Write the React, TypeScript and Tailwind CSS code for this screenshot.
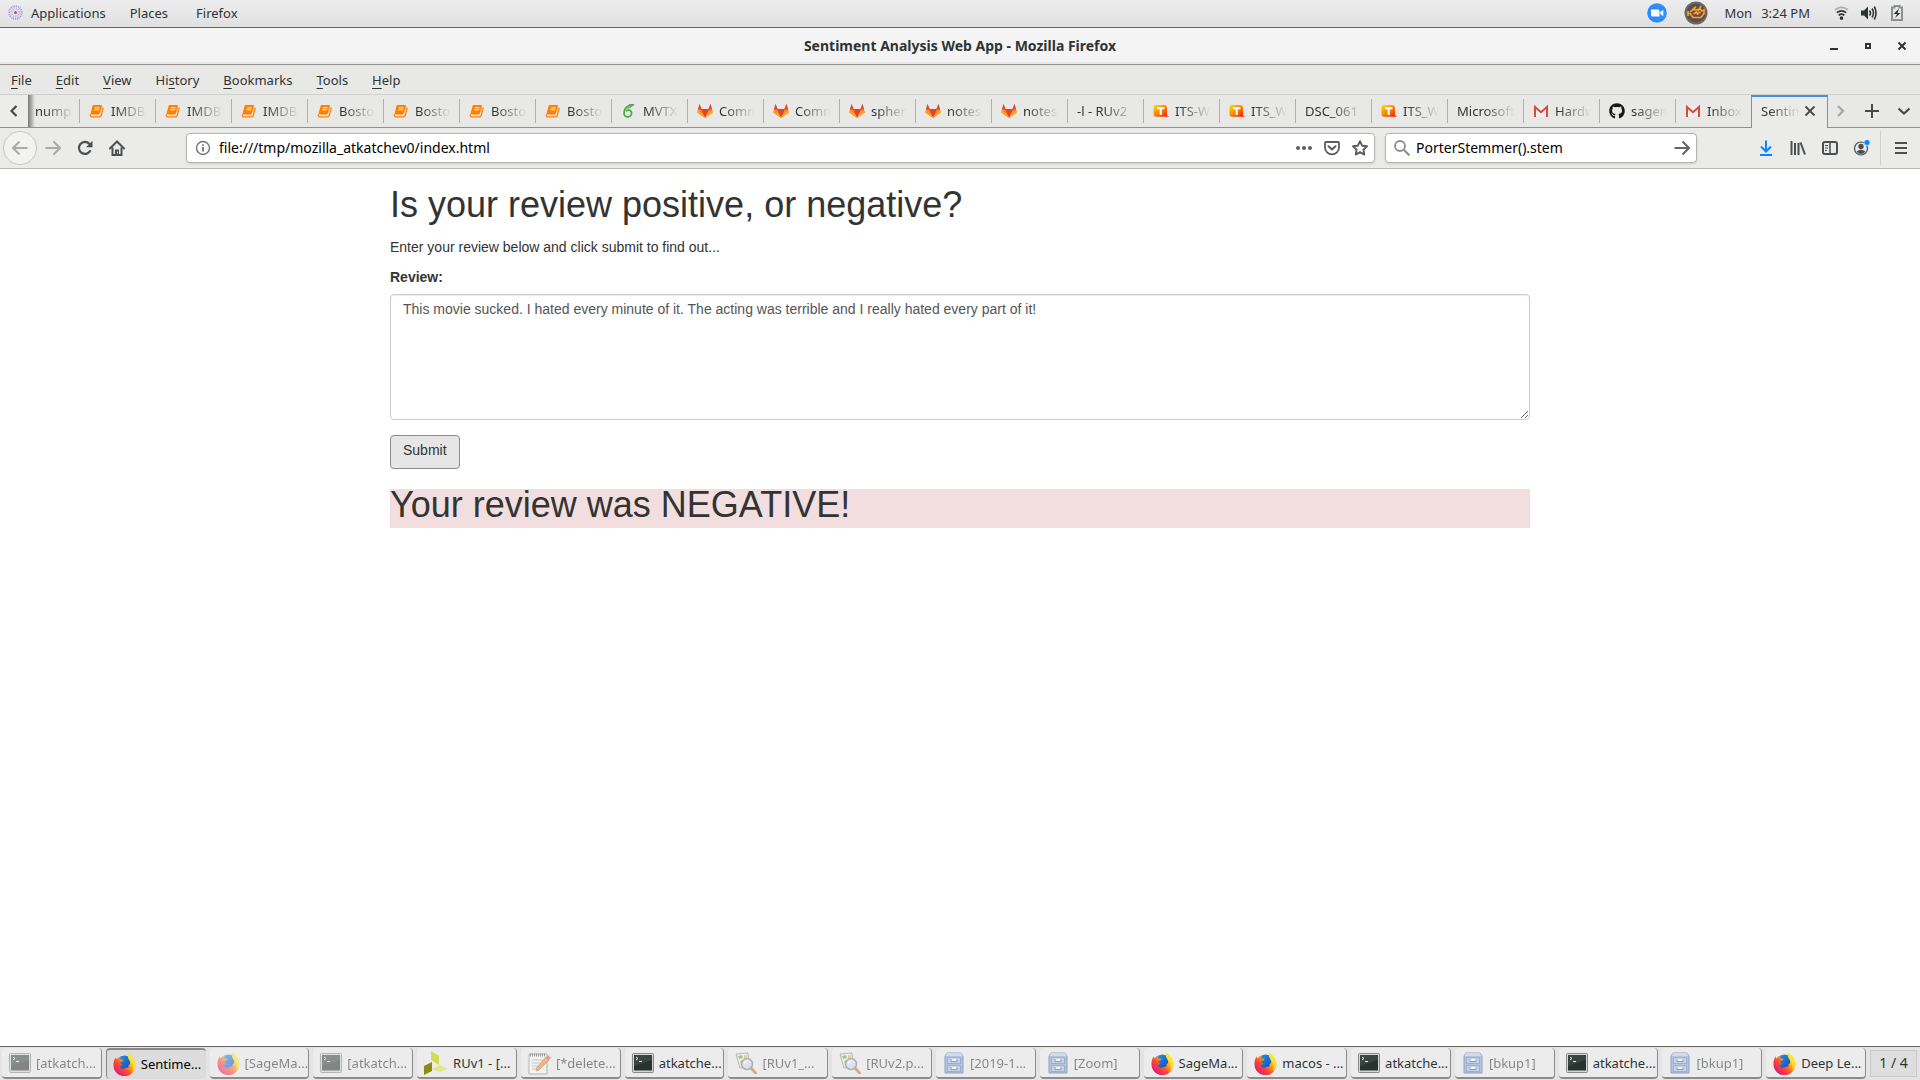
import React from "react";
import { FaGithub } from "react-icons/fa";

const iconNames = ["book", "overleaf", "gitlab", "typo", "gmail", "github"] as const;
type Favicon = (typeof iconNames)[number];

const tabs: { title: string; icon?: Favicon }[] = [
  { title: "IMDB", icon: "book" },
  { title: "IMDB", icon: "book" },
  { title: "IMDB", icon: "book" },
  { title: "Bosto", icon: "book" },
  { title: "Bosto", icon: "book" },
  { title: "Bosto", icon: "book" },
  { title: "Bosto", icon: "book" },
  { title: "MVTX", icon: "overleaf" },
  { title: "Comm", icon: "gitlab" },
  { title: "Comm", icon: "gitlab" },
  { title: "spher", icon: "gitlab" },
  { title: "notes", icon: "gitlab" },
  { title: "notes", icon: "gitlab" },
  { title: "-l - RUv2" },
  { title: "ITS-W", icon: "typo" },
  { title: "ITS_W", icon: "typo" },
  { title: "DSC_061" },
  { title: "ITS_W", icon: "typo" },
  { title: "Microsoft" },
  { title: "Hardw", icon: "gmail" },
  { title: "sagem", icon: "github" },
  { title: "Inbox", icon: "gmail" },
];

type AppIcon = "terminal" | "firefox" | "vivado" | "editor" | "viewer" | "files";

const tasks: { title: string; icon: AppIcon; min?: boolean; active?: boolean }[] = [
  { title: "[atkatch...", icon: "terminal", min: true },
  { title: "Sentime...", icon: "firefox", active: true },
  { title: "[SageMa...", icon: "firefox", min: true },
  { title: "[atkatch...", icon: "terminal", min: true },
  { title: "RUv1 - [...", icon: "vivado" },
  { title: "[*delete...", icon: "editor", min: true },
  { title: "atkatche...", icon: "terminal" },
  { title: "[RUv1_...", icon: "viewer", min: true },
  { title: "[RUv2.p...", icon: "viewer", min: true },
  { title: "[2019-1...", icon: "files", min: true },
  { title: "[Zoom]", icon: "files", min: true },
  { title: "SageMa...", icon: "firefox" },
  { title: "macos - ...", icon: "firefox" },
  { title: "atkatche...", icon: "terminal" },
  { title: "[bkup1]", icon: "files", min: true },
  { title: "atkatche...", icon: "terminal" },
  { title: "[bkup1]", icon: "files", min: true },
  { title: "Deep Le...", icon: "firefox" },
];

function FaviconImage({ name }: { name: Favicon }) {
  switch (name) {
    case "book":
      return (
        <svg className="size-4 shrink-0" viewBox="0 0 16 16">
          <path d="M4.800 2h7.400q1.100 0 .8 1.100l-2.200 7.400q-.3 1-1.300 1H1.300L3.500 3.200Q3.800 2 4.800 2Z" fill="#ff8000" />
          <path d="M1.300 11.500q-.3 2.300 1.700 2.300h7.700q1.100 0 1.400-1L14.300 4.500" fill="none" stroke="#ff8000" strokeWidth="1.300" />
          <path d="M5.800 4.700h4.800M5.200 6.700h4.800" stroke="#fff" strokeWidth="1.100" />
        </svg>
      );
    case "overleaf":
      return (
        <svg className="size-4 shrink-0" viewBox="0 0 16 16" fill="none" stroke="#47a844">
          <path d="M9.500 2C5.500 3 2.700 6.500 3 10.300a3.800 3.800 0 1 0 7.400-1.300C9.700 6.800 6.800 6.600 5 8.200" strokeWidth="1.700" />
          <path d="M7.500 2.300Q9.500 1.300 13 1.700 10.500 2.400 9 4.300L6.500 5.200" strokeWidth="1.300" />
        </svg>
      );
    case "gitlab":
      return (
        <svg className="size-4 shrink-0" viewBox="0 0 16 16">
          <path d="M8 15 3.300 6h9.400Z" fill="#e24329" />
          <path d="M8 15 .8 9.800 1 6h2.800ZM8 15l7.200-5.200L15 6h-2.800Z" fill="#fc8a26" />
          <path d="M8 15 0 9.500.6 7.200 5 10.500ZM8 15l8-5.500-.6-2.300L11 10.500Z" fill="#fca326" />
          <path d="M.8 6.600 2.600.8 4.800 6.600ZM15.200 6.600 13.400.8l-2.200 5.800Z" fill="#e24329" />
        </svg>
      );
    case "typo":
      return (
        <svg className="size-4 shrink-0" viewBox="0 0 16 16">
          <defs>
            <linearGradient id="typo" x1="0" y1="0" x2="1" y2="1">
              <stop offset="0" stopColor="#ffe000" />
              <stop offset=".45" stopColor="#ff8a00" />
              <stop offset="1" stopColor="#f50a00" />
            </linearGradient>
          </defs>
          <path d="M3 2h8q3 0 3 3v7.500l2 1.300H3q-2.500 0-2.500-2.800V5Q.5 2 3 2Z" fill="url(#typo)" />
          <path d="M4 4.300h7.400v2H8.800V12H6.600V6.300H4Z" fill="#fff" />
        </svg>
      );
    case "gmail":
      return (
        <svg className="size-4 shrink-0" viewBox="0 0 16 16">
          <path d="M1 3h14v11H1Z" fill="#f1efee" />
          <path d="M2 14V4L8 9.200 14 4v10" fill="none" stroke="#d54b3d" strokeWidth="2" />
        </svg>
      );
    case "github":
      return <FaGithub className="size-4 shrink-0 text-[#191717]" />;
  }
}

function TaskIcon({ name }: { name: AppIcon }) {
  switch (name) {
    case "terminal":
      return (
        <svg className="size-[22px] shrink-0" viewBox="0 0 22 22">
          <rect x=".5" y="1.500" width="21" height="19" rx="1" fill="#d5d6d3" stroke="#888a85" />
          <rect x="2" y="3" width="18" height="15.500" fill="#2a3230" />
          <path d="M2 3h18v5L2 14Z" fill="#3a4442" />
          <path d="m4 5 2 1.500L4 8M7 9.500h3" fill="none" stroke="#f0f0f0" />
        </svg>
      );
    case "firefox":
      return (
        <svg className="size-[23px] shrink-0" viewBox="0 0 24 24">
          <defs>
            <linearGradient id="fox" x1=".9" y1=".1" x2=".15" y2=".9">
              <stop offset="0" stopColor="#fff044" />
              <stop offset=".35" stopColor="#ffb01c" />
              <stop offset=".65" stopColor="#ff4a2e" />
              <stop offset="1" stopColor="#e3147e" />
            </linearGradient>
            <linearGradient id="globe" x1="0" y1="0" x2="1" y2="1">
              <stop offset="0" stopColor="#19a3ff" />
              <stop offset="1" stopColor="#1b2f9e" />
            </linearGradient>
          </defs>
          <circle cx="12" cy="12" r="9.500" fill="url(#globe)" />
          <path d="M15.500.5c3 2 7.800 6 8 12A11.500 11.500 0 0 1 .5 13C.3 9.500 1.300 6.500 3 4.500c0 1 .2 1.600.8 2.300C5 5 6.800 3.700 8.800 3.300 7.800 4.300 7.200 5.500 7.400 6.500c1.200-.2 2.600.1 3.600.5-.1 1.300-1.500 2-2.800 2.600-.5.300-.3 1.300-.3 2 .8-.1 1.300.4 2 .5-.8 1-2 1.700-3.200 1.600 1 2.200 3 3 4.800 2.600 1.700-.3 2.700-1.400 4.300-1 .7-1 .4-1.300-.2-1.700 2-1 2.800-3.400 2.300-5.200-.5-2-2.900-3.600-2.400-7.400Z" fill="url(#fox)" />
          <path d="M15.500.5c3 2 7.800 6 8 12-.3 3-1.500 5-3.500 7 1.500-4 .6-7-1.600-9.600C16.400 7 15 4.500 15.500.5Z" fill="#ffe62e" opacity=".85" />
        </svg>
      );
    case "vivado":
      return (
        <svg className="size-[24px] shrink-0" viewBox="0 0 24 24">
          <path d="m7 0 8 5v9L7 9Z" fill="#d3dd52" />
          <path d="m8 11v9l-8 4v-9Z" fill="#8c8c10" />
          <path d="m8 18 8-4 8 4-8 3Z" fill="#e2e68c" />
        </svg>
      );
    case "editor":
      return (
        <svg className="size-[23px] shrink-0" viewBox="0 0 23 23">
          <path d="M1 2h18v20H1Z" fill="#f8f8f6" stroke="#888" />
          <path d="M2 3h16" stroke="#555" strokeWidth="3" strokeDasharray="1 1" />
          <path d="M4 8h11M4 11h8M4 14h6M4 17h7" stroke="#aaa" />
          <path d="m8 19 1-4L18 5l3 3-10 10Z" fill="#f08a28" stroke="#a85a18" strokeWidth=".7" />
          <path d="m18 5 2-2 3 3-2 2Z" fill="#e05050" />
        </svg>
      );
    case "viewer":
      return (
        <svg className="size-[22px] shrink-0" viewBox="0 0 22 22">
          <path d="m1 2 12-1 1 13-9 2Z" fill="#f5f5ee" stroke="#888" />
          <path d="m3 4 4-1 1 3-4 1Z" fill="#63a848" />
          <path d="m9 3 3 0v4l-3 0Z" fill="#e3b63a" />
          <path d="m5 9 4-1v4l-3 1Z" fill="#d89824" />
          <path d="m16 16 4.500 5" stroke="#c27a20" strokeWidth="3" strokeLinecap="round" />
          <circle cx="12" cy="12" r="5.500" fill="#cfdcec" stroke="#7a7f88" strokeWidth="1.500" />
          <path d="M9 12q1-3 4-3" fill="none" stroke="#fff" strokeWidth="1.500" />
        </svg>
      );
    case "files":
      return (
        <svg className="size-[22px] shrink-0" viewBox="0 0 22 22">
          <path d="M4 1h14l2 3v17H2V4Z" fill="#84a8da" stroke="#41659e" />
          <path d="M4 1h14l1.500 3h-17Z" fill="#b7cdee" />
          <rect x="4.500" y="5.500" width="13" height="6" fill="#a4c0e8" stroke="#5a7fb8" />
          <rect x="4.500" y="13.500" width="13" height="6" fill="#a4c0e8" stroke="#5a7fb8" />
          <path d="M8 7v2.500h6V7M8 15v2.500h6V15" fill="#fff" stroke="#555" />
        </svg>
      );
  }
}

function TopPanel() {
  return (
    <header className="flex h-7 shrink-0 items-center justify-between border-b border-[#666] bg-linear-to-b from-[#ededed] to-[#e0e0e0] pr-[17px] pb-[2px] pl-2">
      <nav className="flex items-center">
        <svg className="mr-2 size-[15px]" viewBox="0 0 16 16" fill="none">
          <circle cx="8" cy="8" r="6.800" stroke="#9a98d8" strokeWidth="2" strokeDasharray="1 1" />
          <circle cx="8" cy="8" r="4.200" stroke="#b9b8e4" strokeWidth="2.500" strokeDasharray="1 1" />
          <circle cx="8" cy="8" r="1.600" fill="#c34a5c" />
        </svg>
        <button className="mr-6">Applications</button>
        <button className="mr-7">Places</button>
        <button>Firefox</button>
      </nav>
      <div className="flex items-center">
        <svg className="mr-4 size-[22px]" viewBox="0 0 22 22">
          <circle cx="11" cy="11" r="10.500" fill="#eee" />
          <circle cx="11" cy="11" r="9.800" fill="#2f8cff" />
          <path d="M5 7.500h7q1.500 0 1.500 1.500v5.500h-7Q5 14.500 5 13ZM14.300 10l3-2.200v6.400l-3-2.200Z" fill="#fff" />
        </svg>
        <svg className="mr-4 size-6" viewBox="0 0 24 24">
          <circle cx="12" cy="12" r="11.500" fill="#6b6967" />
          <circle cx="12" cy="12" r="9.500" fill="#59504a" />
          <path d="M4 10v5M4 12.500h2l3 4h8l3-4V9l-2 1-2-2-4 1-3-.5-2 2H6M9 8l3-2M14 10l3-5M9.500 13l3-2 1 2 3-2" fill="none" stroke="#ff9d2e" strokeWidth="1.700" />
        </svg>
        <span className="mr-[9px]">Mon</span>
        <span className="mr-6">3:24 PM</span>
        <svg className="mr-3 size-[15px]" viewBox="0 0 16 16" fill="none" stroke="#2e3436" strokeWidth="1.800">
          <path d="M1 5.200q7-5.500 14 0" stroke="#aaa" />
          <path d="M3 8.200q5-4 10 0" />
          <path d="M5 11q3-2.500 6 0" />
          <circle cx="8" cy="14" r="1" fill="#2e3436" />
        </svg>
        <svg className="mr-[14px] size-4" viewBox="0 0 16 16" fill="none" stroke="#2e3436" strokeWidth="1.600">
          <path d="M0 5.500h3L7 1.500v13l-4-4H0Z" fill="#2e3436" stroke="none" />
          <path d="M8.500 5.500q2 2.500 0 5M11 3.500q3 4.500 0 9M13.300 1.500q3.500 6.500 0 13" />
        </svg>
        <svg className="h-4 w-3" viewBox="0 0 12 16">
          <path d="M1 2.500h2.500V1h5v1.500H11V15H1Z" fill="none" stroke="#8d9091" strokeWidth="2" />
          <path d="M8 3.500 2.500 9H6l-2 4L9.500 8H6.500Z" fill="#2e3436" />
        </svg>
      </div>
    </header>
  );
}

function TitleBar() {
  return (
    <div className="grid h-[37px] shrink-0 grid-cols-[1fr_auto_1fr] items-center border-b border-[#8f908b] bg-[#f4f4f4] shadow-[inset_0_-2px_0_#e9e9e9]">
      <span />
      <h1 className="text-sm font-bold">Sentiment Analysis Web App - Mozilla Firefox</h1>
      <div className="flex items-center justify-end gap-6 pr-[13px]">
        <button aria-label="Minimize">
          <svg className="size-[10px]" viewBox="0 0 10 10"><path d="M1 8h8" stroke="#2e3436" strokeWidth="2" /></svg>
        </button>
        <button aria-label="Maximize">
          <svg className="size-[10px]" viewBox="0 0 10 10"><path d="M3 3h4v4H3Z" fill="none" stroke="#2e3436" strokeWidth="2" /></svg>
        </button>
        <button aria-label="Close window">
          <svg className="size-[10px]" viewBox="0 0 10 10"><path d="m1.500 1.500 7 7m0-7-7 7" stroke="#2e3436" strokeWidth="2" /></svg>
        </button>
      </div>
    </div>
  );
}

function MenuBar() {
  const menus = [
    ["", "F", "ile"],
    ["", "E", "dit"],
    ["", "V", "iew"],
    ["Hi", "s", "tory"],
    ["", "B", "ookmarks"],
    ["", "T", "ools"],
    ["", "H", "elp"],
  ];
  return (
    <nav className="flex h-[30px] shrink-0 items-center gap-6 border-b border-[#cfcfcd] bg-[#e8e8e7] px-[11px]">
      {menus.map(([before, key, after]) => (
        <button key={key + after}>
          {before}
          <u className="underline-offset-3">{key}</u>
          {after}
        </button>
      ))}
    </nav>
  );
}

function TabStrip() {
  return (
    <div className="flex h-[33px] shrink-0 bg-[#e8e8e7]">
      <button aria-label="Scroll tabs left" className="flex w-7 shrink-0 items-center justify-center border-b border-[#8f908b] bg-[#ececeb]">
        <svg className="size-4" viewBox="0 0 16 16"><path d="M10.500 3 5.500 8l5 5" fill="none" stroke="#444a4c" strokeWidth="2.200" /></svg>
      </button>
      <div role="tablist" className="flex min-w-0 overflow-hidden">
        <button role="tab" className="flex w-[52px] shrink-0 items-center border-b border-[#8f908b]">
          <span className="h-full w-[7px] shrink-0 bg-linear-to-r from-[#777] to-transparent" />
          <span className="flex-1 overflow-hidden text-left whitespace-nowrap mask-[linear-gradient(to_right,black_20%,transparent_98%)]">nump</span>
          <span className="ml-1 h-6 w-px bg-[#b0b0af]" />
        </button>
        {tabs.map((tab, i) => (
          <button key={i} role="tab" className="flex w-[76px] shrink-0 items-center border-b border-[#8f908b] pl-[9px]">
            {tab.icon && (
              <span className="mr-[6px]">
                <FaviconImage name={tab.icon} />
              </span>
            )}
            <span className="w-0 flex-1 overflow-hidden text-left whitespace-nowrap mask-[linear-gradient(to_right,black_calc(100%-32px),transparent)]">
              {tab.title}
            </span>
            <span className={i === tabs.length - 1 ? "ml-[9px] h-6" : "ml-2 h-6 w-px bg-[#b0b0af]"} />
          </button>
        ))}
        <div className="-ml-px flex w-[77px] shrink-0 items-center border-x border-t-2 border-x-[#8f908b] border-t-[#4a90d9] bg-[#ebebea] pr-[11px] pb-[3px] pl-[9px]">
          <button role="tab" aria-selected="true" className="w-0 flex-1 overflow-hidden text-left whitespace-nowrap mask-[linear-gradient(to_right,black_20%,transparent)]">
            Sentim
          </button>
          <button aria-label="Close tab" className="ml-1">
            <svg className="size-3" viewBox="0 0 12 12"><path d="m1.500 1.500 9 9m0-9-9 9" stroke="#444a4c" strokeWidth="1.800" /></svg>
          </button>
        </div>
      </div>
      <div className="flex flex-1 items-center justify-end gap-4 border-b border-[#8f908b] pr-2">
        <button aria-label="Scroll tabs right">
          <svg className="size-4" viewBox="0 0 16 16"><path d="m6 3 5 5-5 5" fill="none" stroke="#a6a8a8" strokeWidth="2.200" /></svg>
        </button>
        <button aria-label="New tab">
          <svg className="size-4" viewBox="0 0 16 16"><path d="M8 1v14M1 8h14" stroke="#444a4c" strokeWidth="2" /></svg>
        </button>
        <button aria-label="List all tabs">
          <svg className="size-4" viewBox="0 0 16 16"><path d="m2.500 5.500 5.500 5 5.500-5" fill="none" stroke="#444a4c" strokeWidth="2.200" /></svg>
        </button>
      </div>
    </div>
  );
}

function NavBar() {
  return (
    <div className="flex h-[41px] shrink-0 items-center border-b border-[#b6b6b3] bg-[#ebebea] pl-[3px] text-[#4a4f51]">
      <button aria-label="Back" className="mr-2 flex size-[34px] items-center justify-center rounded-full border border-[#c6c6c4] bg-[#f2f2f1]">
        <svg className="size-4" viewBox="0 0 16 16"><path d="M15.500 8H1M7.500 1.500 1 8l6.500 6.500" fill="none" stroke="#a9abab" strokeWidth="2" /></svg>
      </button>
      <button aria-label="Forward" className="mr-4">
        <svg className="size-4" viewBox="0 0 16 16"><path d="M.5 8H15M8.500 1.500 15 8l-6.500 6.500" fill="none" stroke="#a9abab" strokeWidth="2" /></svg>
      </button>
      <button aria-label="Reload" className="mr-4">
        <svg className="size-4" viewBox="0 0 16 16">
          <path d="M13.500 10.300A6 6 0 1 1 12.500 4" fill="none" stroke="currentColor" strokeWidth="2.200" />
          <path d="M15.500.8V7.200H9Z" fill="currentColor" />
        </svg>
      </button>
      <button aria-label="Home">
        <svg className="size-4" viewBox="0 0 16 16">
          <path d="M1 8.500 8 1.500l7 7" fill="none" stroke="currentColor" strokeWidth="2" strokeLinecap="round" />
          <path d="M3.500 7.500V15h9V7.500" fill="none" stroke="currentColor" strokeWidth="2" />
          <path d="M6 15V9.500h4V15" fill="currentColor" />
          <path d="M8 11.500h1v2H8z" fill="#ebebea" />
        </svg>
      </button>
      <label className="mr-[10px] ml-[61px] flex h-[30px] flex-1 items-center rounded border border-[#b4b4b1] bg-white px-[6px] pl-2 shadow-sm">
        <svg className="mr-2 size-4 shrink-0" viewBox="0 0 16 16">
          <circle cx="8" cy="8" r="6.500" fill="none" stroke="#737373" strokeWidth="1.400" />
          <path d="M8 7v4.500M8 4.200v1.600" stroke="#737373" strokeWidth="1.800" />
        </svg>
        <input aria-label="Address" className="min-w-0 flex-1 text-sm text-black outline-none" defaultValue="file:///tmp/mozilla_atkatchev0/index.html" />
        <span className="flex items-center gap-3 text-[#5c5c5c]">
          <svg className="size-4" viewBox="0 0 16 16" fill="currentColor"><circle cx="2" cy="8" r="2" /><circle cx="8" cy="8" r="2" /><circle cx="14" cy="8" r="2" /></svg>
          <svg className="size-4" viewBox="0 0 16 16" fill="none" stroke="currentColor" strokeWidth="2">
            <path d="M2 2h12q1 0 1 1v4.500a7 6.800 0 0 1-14 0V3q0-1 1-1Z" strokeWidth="1.800" />
            <path d="m4.500 6.200 3.500 3.300 3.500-3.300" strokeLinecap="round" />
          </svg>
          <svg className="size-4" viewBox="0 0 16 16"><path d="m8 1.200 2.100 4.500 4.900.6-3.600 3.400.9 4.900L8 12.200l-4.300 2.400.9-4.900L1 6.300l4.900-.6Z" fill="none" stroke="currentColor" strokeWidth="1.900" strokeLinejoin="round" /></svg>
        </span>
      </label>
      <label className="flex h-[30px] w-[312px] items-center rounded border border-[#b4b4b1] bg-white pr-[6px] pl-2 shadow-sm">
        <svg className="mr-[6px] size-4 shrink-0" viewBox="0 0 16 16"><circle cx="6" cy="6" r="5" fill="none" stroke="#8c8c8c" strokeWidth="1.800" /><path d="m9.800 9.800 5.700 5.700" stroke="#8c8c8c" strokeWidth="2" /></svg>
        <input aria-label="Search" className="min-w-0 flex-1 text-sm text-black outline-none" defaultValue="PorterStemmer().stem" />
        <button aria-label="Go">
          <svg className="size-4" viewBox="0 0 16 16"><path d="M.5 8H15M8.500 1.500 15 8l-6.500 6.500" fill="none" stroke="#666" strokeWidth="2" /></svg>
        </button>
      </label>
      <div className="ml-[61px] flex items-center gap-4">
        <button aria-label="Downloads">
          <svg className="size-4" viewBox="0 0 16 16"><path d="M8 .5v11M3 6.500l5 5 5-5M2 15h12" fill="none" stroke="#0a84ff" strokeWidth="2" /></svg>
        </button>
        <button aria-label="Library">
          <svg className="size-4" viewBox="0 0 16 16"><path d="M1.500 1v14M5 3v12M8.500 3v12M10.500 2.500l4.500 12" stroke="currentColor" strokeWidth="2" /></svg>
        </button>
        <button aria-label="Sidebars">
          <svg className="size-4" viewBox="0 0 16 16" fill="none" stroke="currentColor">
            <rect x="1" y="2" width="14" height="12" rx="2" strokeWidth="2" />
            <path d="M8 2v12" strokeWidth="1.500" />
            <path d="M3 5.500h3M3 8h3M3 10.500h2" />
          </svg>
        </button>
        <button aria-label="Account">
          <svg className="size-4" viewBox="0 0 16 16">
            <circle cx="7" cy="8.500" r="6.500" fill="none" stroke="currentColor" strokeWidth="1.200" />
            <circle cx="7" cy="6.500" r="2.700" fill="currentColor" />
            <path d="M2.500 11.500q4.500-3.500 9 0Q9.500 14 7 14t-4.500-2.500Z" fill="currentColor" />
            <circle cx="13" cy="2.500" r="3" fill="#0a84ff" stroke="#ebebea" strokeWidth=".7" />
          </svg>
        </button>
      </div>
      <span className="ml-[10px] h-[34px] w-px bg-[#cfcfcd]" />
      <button aria-label="Open menu" className="mr-[11px] ml-3">
        <svg className="size-4" viewBox="0 0 16 16"><path d="M2 3h12M2 8h12M2 13h12" stroke="currentColor" strokeWidth="2" /></svg>
      </button>
    </div>
  );
}

function ReviewPage() {
  return (
    <main className="flex-1 bg-white font-['Liberation_Sans',sans-serif] text-sm text-[#333]">
      <div className="mx-auto max-w-[1140px] pt-4">
        <h1 className="text-4xl leading-10">Is your review positive, or negative?</h1>
        <p className="mt-3 leading-5">Enter your review below and click submit to find out...</p>
        <form onSubmit={(e) => e.preventDefault()}>
          <label htmlFor="review" className="mt-[10px] block leading-5 font-bold">
            Review:
          </label>
          <textarea
            id="review"
            className="mt-[7px] block h-[126px] w-full resize-y rounded border border-[#ccc] px-3 py-1 leading-5 text-[#555] shadow-[inset_0_1px_1px_rgba(0,0,0,0.075)] outline-none"
            defaultValue="This movie sucked. I hated every minute of it. The acting was terrible and I really hated every part of it!"
          />
          <button type="submit" className="mt-[15px] block h-[34px] rounded border border-[#8c8c8c] bg-[#e6e6e6] px-3 pb-1 leading-5">
            Submit
          </button>
        </form>
        <h1 className="mt-5 bg-[#f2dede] pb-[7px] text-4xl leading-8">Your review was NEGATIVE!</h1>
      </div>
    </main>
  );
}

function TaskBar() {
  return (
    <footer className="flex h-[34px] shrink-0 gap-1 border-t border-[#666] bg-[#e4e4e4] pt-px pr-[3px] pb-px pl-[2px]">
      <div className="grid flex-1 grid-cols-18 gap-1">
        {tasks.map((task, i) => (
          <button
            key={i}
            className={
              task.active
                ? "flex min-w-0 items-center rounded-sm border-t-2 border-l border-[#888] bg-[#dcdcdc] pb-px pl-[6px] text-black"
                : "flex min-w-0 items-center rounded-sm border-r border-b-2 border-[#8c8c8c] bg-[#ececec] pt-px pl-[7px]"
            }
          >
            <span className={task.min ? "flex items-center gap-[5px] opacity-55" : "flex items-center gap-[5px]"}>
              <TaskIcon name={task.icon} />
              <span className="whitespace-nowrap">{task.title}</span>
            </span>
          </button>
        ))}
      </div>
      <button className="my-[2px] w-[47px] shrink-0 border border-[#cacaca] bg-[#dedede] pb-px text-sm">1 / 4</button>
    </footer>
  );
}

export default function App() {
  return (
    <div className="flex min-h-screen flex-col font-['Noto_Sans',sans-serif] text-[13px] leading-5 text-[#2e3436]">
      <TopPanel />
      <TitleBar />
      <MenuBar />
      <TabStrip />
      <NavBar />
      <ReviewPage />
      <TaskBar />
    </div>
  );
}
